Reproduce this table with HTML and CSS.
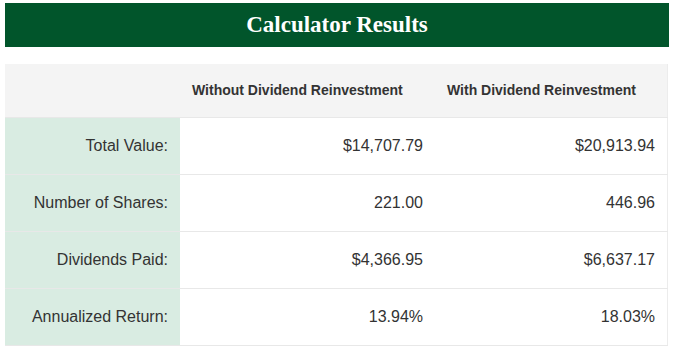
FILE: index.html
```html
<!DOCTYPE html>
<html lang="en">
<head>
<meta charset="utf-8">
<title>Calculator Results</title>
<link rel="stylesheet" href="styles.css">
</head>
<body>
<div class="wrap">
  <h2 class="title">Calculator Results</h2>
  <table class="results">
    <thead>
      <tr>
        <th class="blank"></th>
        <th>Without Dividend Reinvestment</th>
        <th>With Dividend Reinvestment</th>
      </tr>
    </thead>
    <tbody>
      <tr>
        <td class="label">Total Value:</td>
        <td>$14,707.79</td>
        <td>$20,913.94</td>
      </tr>
      <tr>
        <td class="label">Number of Shares:</td>
        <td>221.00</td>
        <td>446.96</td>
      </tr>
      <tr>
        <td class="label">Dividends Paid:</td>
        <td>$4,366.95</td>
        <td>$6,637.17</td>
      </tr>
      <tr>
        <td class="label">Annualized Return:</td>
        <td>13.94%</td>
        <td>18.03%</td>
      </tr>
    </tbody>
  </table>
</div>
</body>
</html>
```

FILE: styles.css
```css
html, body {
  margin: 0;
  padding: 0;
  background: #ffffff;
}

.wrap {
  padding: 3px 10px 0 5px;
  width: 664px;
  font-family: "Liberation Sans", Arial, sans-serif;
  color: #333333;
}

.title {
  margin: 0 0 17px 0;
  height: 44px;
  line-height: 44px;
  background: #01552b;
  color: #ffffff;
  text-align: center;
  font-family: "Liberation Serif", "Times New Roman", serif;
  font-weight: bold;
  font-size: 23px;
}

.results {
  width: 663px;
  border-collapse: collapse;
  table-layout: fixed;
}

.results th {
  background: #f4f4f4;
  text-align: left;
  font-size: 14px;
  font-weight: bold;
  line-height: 21px;
  padding: 16px 12px;
  border-bottom: 1px solid #e8e8e8;
  color: #333333;
}

.results th.blank {
  width: 151px;
}

.results th:nth-child(2) {
  width: 231px;
}

.results td {
  font-size: 16px;
  line-height: 20px;
  padding: 18px 12px;
  text-align: right;
  border-bottom: 1px solid #e8e8e8;
  background: #ffffff;
}

.results td:last-child,
.results th:last-child {
  border-right: 1px solid #ececec;
}

.results td.label {
  background: #d9ece2;
}
```
